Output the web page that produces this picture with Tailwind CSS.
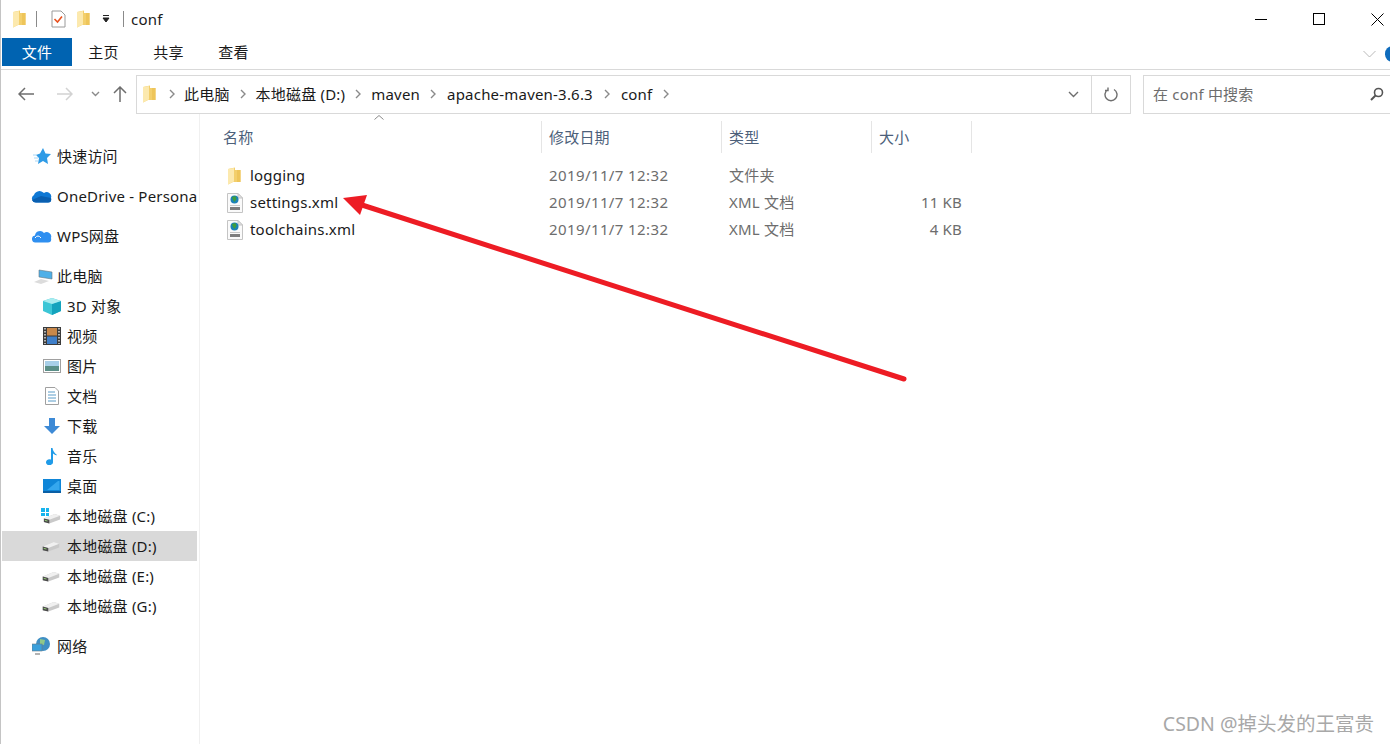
<!DOCTYPE html>
<html lang="zh-CN">
<head>
  <meta charset="UTF-8" />
  <title>conf</title>
  <script src="https://cdn.jsdelivr.net/npm/@tailwindcss/browser@4"></script>
</head>
<body class="overflow-hidden bg-white">
  <!-- shared icons -->
  <svg class="hidden">
    <symbol id="folder" viewBox="0 0 14 18">
      <path d="M1 2 L8 0.500 V3 H13.500 V15 H6 L1 17.500 Z" fill="#f3cf6c"/>
      <path d="M1 2 L7 1 V14.500 L1 17.500 Z" fill="#fce9ae"/>
      <path d="M10 3 H13.500 V15 H10 Z" fill="#eec55a"/>
    </symbol>
    <symbol id="xmlfile" viewBox="0 0 18 20">
      <path d="M1.500 0.500 H12 L16.500 5 V19.500 H1.500 Z" fill="#fafafa" stroke="#c4c4c4"/>
      <path d="M12 0.500 V5 H16.500 Z" fill="#e4e4e4" stroke="#c4c4c4"/>
      <circle cx="8.500" cy="6.500" r="4" fill="#1b82b8"/>
      <path d="M6 4 L9.500 3 L10.500 6 L8.500 9 L7 7 Z" fill="#3f9e3a"/>
      <rect x="4" y="12" width="10" height="1" fill="#c8c8c8"/>
      <rect x="4" y="14" width="10" height="3" fill="#7d7d7d"/>
    </symbol>
    <symbol id="disk" viewBox="0 0 20 12">
      <path d="M1 6 L13 1 L19 3 V7 L7 11.500 L1 10 Z" fill="#c9c9c9"/>
      <path d="M1 6 L13 1 L19 3 L7 7.500 Z" fill="#f0f0f0"/>
      <path d="M1 6 L7 7.500 V11.500 L1 10 Z" fill="#4a4a4a"/>
      <path d="M2 8 L5 8.800" stroke="#9ad67a"/>
    </symbol>
    <symbol id="chev" viewBox="0 0 8 10">
      <path d="M2 1 L6 5 L2 9" fill="none" stroke="#8a8a8a" stroke-width="1.400"/>
    </symbol>
  </svg>

  <div class="relative h-[744px] w-[1390px] overflow-hidden border-l border-l-[#c4c4c4] text-[15px] tracking-[0.2px] text-[#1a1a1a]" style="font-family:'Noto Sans','Noto Sans CJK SC',sans-serif">
    <div class="absolute left-[-1px] top-0 h-[250px] w-px bg-black"></div>

    <!-- title bar -->
    <div class="flex h-[38px] items-center pl-[11px]">
      <svg class="h-[18px] w-[14px]"><use href="#folder"/></svg>
      <div class="ml-[10px] h-[16px] w-px bg-[#8a8a8a]"></div>
      <svg class="ml-[14px] h-[18px] w-[15px]" viewBox="0 0 15 18">
        <path d="M1 1 H10 L14 5 V17 H1 Z" fill="#fff" stroke="#9a9a9a"/>
        <path d="M3.500 9 L6.500 12 L11 6.500" fill="none" stroke="#e8511f" stroke-width="1.600"/>
      </svg>
      <svg class="ml-[10px] h-[18px] w-[14px]"><use href="#folder"/></svg>
      <svg class="ml-[12px] h-[10px] w-[8px]" viewBox="0 0 8 10"><path d="M1 1.500 H7 M1 4 H7 L4 8 Z" stroke="#222" fill="#222"/></svg>
      <div class="ml-[13px] h-[16px] w-px bg-[#8a8a8a]"></div>
      <span class="ml-[7px]">conf</span>
      <div class="ml-auto flex items-center">
        <div class="h-px w-[12px] bg-black"></div>
        <div class="ml-[46px] h-[12px] w-[12px] border border-black"></div>
        <svg class="ml-[46px] mr-[6px] h-[13px] w-[13px]" viewBox="0 0 13 13"><path d="M0.500 0.500 L12.500 12.500 M12.500 0.500 L0.500 12.500" stroke="#000"/></svg>
      </div>
    </div>

    <!-- ribbon tabs -->
    <div class="flex h-[32px] items-start border-b border-[#d9d9d9] pl-px">
      <div class="flex h-[28px] w-[70px] items-center justify-center bg-[#0063b1] text-white">文件</div>
      <div class="ml-[-1px] flex h-[29px] w-[65px] items-center justify-center">主页</div>
      <div class="flex h-[29px] w-[65px] items-center justify-center">共享</div>
      <div class="flex h-[29px] w-[65px] items-center justify-center">查看</div>
      <div class="ml-auto flex items-center pt-[8px]">
        <svg class="h-[8px] w-[13px]" viewBox="0 0 13 8"><path d="M0.500 1 L6.500 7 L12.500 1" fill="none" stroke="#b9b9b9"/></svg>
        <div class="ml-[9px] mr-[-10px] h-[16px] w-[15px] rounded-full bg-[#0f6cbd]"></div>
      </div>
    </div>

    <!-- address row -->
    <div class="flex h-[44px] items-center pl-[17px] pt-[4px]">
      <svg class="h-[14px] w-[16px] shrink-0" viewBox="0 0 16 14"><path d="M7 1 L1 7 L7 13 M1 7 H16" fill="none" stroke="#6e6e6e" stroke-width="1.500"/></svg>
      <svg class="ml-[23px] h-[14px] w-[16px] shrink-0" viewBox="0 0 16 14"><path d="M9 1 L15 7 L9 13 M0 7 H15" fill="none" stroke="#d2d2d2" stroke-width="1.500"/></svg>
      <svg class="ml-[18px] h-[6px] w-[9px] shrink-0" viewBox="0 0 9 6"><path d="M1 1 L4.500 4.500 L8 1" fill="none" stroke="#8a8a8a" stroke-width="1.400"/></svg>
      <svg class="ml-[13px] h-[16px] w-[14px] shrink-0" viewBox="0 0 14 16"><path d="M1 7 L7 1 L13 7 M7 1 V16" fill="none" stroke="#6e6e6e" stroke-width="1.500"/></svg>
      <div class="ml-[9px] flex h-[39px] w-[995px] shrink-0 items-center border border-[#d9d9d9] pl-[5px]">
        <svg class="h-[18px] w-[14px]"><use href="#folder"/></svg>
        <svg class="ml-[12px] h-[10px] w-[8px]"><use href="#chev"/></svg>
        <span class="ml-[8px]">此电脑</span>
        <svg class="ml-[9px] h-[10px] w-[8px]"><use href="#chev"/></svg>
        <span class="ml-[9px]">本地磁盘 (D:)</span>
        <svg class="ml-[9px] h-[10px] w-[8px]"><use href="#chev"/></svg>
        <span class="ml-[9px]">maven</span>
        <svg class="ml-[9px] h-[10px] w-[8px]"><use href="#chev"/></svg>
        <span class="ml-[10px]">apache-maven-3.6.3</span>
        <svg class="ml-[10px] h-[10px] w-[8px]"><use href="#chev"/></svg>
        <span class="ml-[10px]">conf</span>
        <svg class="ml-[10px] h-[10px] w-[8px]"><use href="#chev"/></svg>
        <svg class="ml-auto mr-[12px] h-[7px] w-[11px]" viewBox="0 0 11 7"><path d="M1 1 L5.500 5.500 L10 1" fill="none" stroke="#6e6e6e" stroke-width="1.400"/></svg>
        <div class="flex h-full w-[39px] items-center justify-center border-l border-[#d9d9d9]">
          <svg class="h-[15px] w-[14px]" viewBox="0 0 14 15"><path d="M4 2.500 A6 6 0 1 0 10 2.500 M4 0.500 V3.500 H1" fill="none" stroke="#6e6e6e" stroke-width="1.400"/></svg>
        </div>
      </div>
      <div class="ml-[12px] flex h-[39px] w-[260px] shrink-0 items-center border border-[#d9d9d9] pl-[9px] text-[#6d6d6d]">
        <span>在 conf 中搜索</span>
        <svg class="ml-auto mr-[18px] h-[14px] w-[14px]" viewBox="0 0 14 14"><circle cx="8.500" cy="5.500" r="4" fill="none" stroke="#555" stroke-width="1.600"/><path d="M5.500 8.500 L1 13" stroke="#555" stroke-width="2"/></svg>
      </div>
    </div>

    <!-- main -->
    <div class="flex h-[630px]">
      <!-- nav pane -->
      <nav class="w-[199px] shrink-0 border-r border-[#f0f0f0] pt-[27px]">
        <div class="flex h-[30px] items-center pl-[32px]">
          <svg class="h-[16px] w-[18px]" viewBox="0 0 18 16"><path d="M10 0 L12.500 5.500 L18 6 L14 10 L15 16 L10 13 L5 16 L6 10 L3 7 L7 5.500 Z" fill="#2e9be6"/><path d="M0 7 H4 M1 10 H5 M2 13 H5" stroke="#a9d6f5"/></svg>
          <span class="ml-[6px]">快速访问</span>
        </div>
        <div class="mt-[10px] flex h-[30px] items-center pl-[30px]">
          <svg class="h-[13px] w-[21px]" viewBox="0 0 21 13"><path d="M5 12.500 A4 4 0 0 1 3 5 A6 6 0 0 1 13 3 A4.500 4.500 0 0 1 20 8 Q21 12.500 17 12.500 Z" fill="#0f78d4"/><path d="M1 10 L10 6 L20 8 Q21 12.500 17 12.500 H5 Q2 12.500 1 10 Z" fill="#0a5fb0"/></svg>
          <span class="ml-[5px] whitespace-nowrap">OneDrive - Persona</span>
        </div>
        <div class="mt-[10px] flex h-[30px] items-center pl-[31px]">
          <svg class="h-[13px] w-[20px]" viewBox="0 0 20 13"><path d="M4 12.500 A3.500 3.500 0 0 1 3 5.500 A5 5 0 0 1 12 3 A4.500 4.500 0 0 1 19 8 Q20 12.500 16 12.500 Z" fill="#2f8ff0"/><path d="M3 8 Q6 4 9 8" fill="none" stroke="#fff"/></svg>
          <span class="ml-[5px]">WPS网盘</span>
        </div>
        <div class="mt-[10px] flex h-[30px] items-center pl-[32px]">
          <svg class="h-[15px] w-[20px]" viewBox="0 0 20 15"><path d="M6 1 L19 3 V10 L6 8 Z" fill="#4fb0e8" stroke="#66777f" stroke-width="0.600"/><path d="M1 13 L8 10 L16 12 L8 15 Z" fill="#dcdcdc"/></svg>
          <span class="ml-[4px]">此电脑</span>
        </div>
        <div class="flex h-[30px] items-center pl-[42px]">
          <svg class="h-[17px] w-[18px]" viewBox="0 0 18 17"><path d="M9 0 L18 3 V13 L9 17 L0 13 V3 Z" fill="#3cc6d6"/><path d="M9 6 L18 3 V13 L9 17 Z" fill="#14a3bd"/><path d="M0 3 L9 0 L18 3 L9 6 Z" fill="#a8ecef"/></svg>
          <span class="ml-[6px]">3D 对象</span>
        </div>
        <div class="flex h-[30px] items-center pl-[42px]">
          <svg class="h-[18px] w-[18px]" viewBox="0 0 18 18"><rect width="18" height="18" fill="#3b3b3b"/><rect x="4" y="1" width="10" height="7.500" fill="#c9884a"/><rect x="4" y="9.500" width="10" height="7.500" fill="#3f7fc9"/><path d="M2 1 V17 M16 1 V17" stroke="#ddd" stroke-dasharray="1.500 1.500" stroke-width="1.500"/></svg>
          <span class="ml-[6px]">视频</span>
        </div>
        <div class="flex h-[30px] items-center pl-[42px]">
          <svg class="h-[14px] w-[18px]" viewBox="0 0 18 14"><rect x="0.500" y="0.500" width="17" height="13" fill="#fff" stroke="#a0a0a0"/><rect x="2" y="2" width="14" height="5" fill="#a8cfe8"/><rect x="2" y="7" width="14" height="5" fill="#5b8f88"/></svg>
          <span class="ml-[6px]">图片</span>
        </div>
        <div class="flex h-[30px] items-center pl-[44px]">
          <svg class="h-[18px] w-[14px]" viewBox="0 0 14 18"><path d="M0.500 0.500 H10 L13.500 4 V17.500 H0.500 Z" fill="#fff" stroke="#a0a0a0"/><path d="M3 5 H10 M3 8 H11 M3 11 H11 M3 14 H11" stroke="#5a9cc8"/></svg>
          <span class="ml-[8px]">文档</span>
        </div>
        <div class="flex h-[30px] items-center pl-[43px]">
          <svg class="h-[16px] w-[16px]" viewBox="0 0 16 16"><path d="M5 0 H11 V8 H16 L8 16 L0 8 H5 Z" fill="#3d8ad6"/></svg>
          <span class="ml-[7px]">下载</span>
        </div>
        <div class="flex h-[30px] items-center pl-[45px]">
          <svg class="h-[17px] w-[12px]" viewBox="0 0 12 17"><path d="M5 0 H6.500 Q7 4 11 7 Q10 8 7 5.500 V14 A3.500 3 0 1 1 5 11.500 Z" fill="#1f9be8"/></svg>
          <span class="ml-[9px]">音乐</span>
        </div>
        <div class="flex h-[30px] items-center pl-[42px]">
          <svg class="h-[14px] w-[18px]" viewBox="0 0 18 14"><rect width="18" height="13" fill="#0f86d8"/><path d="M4 11 L15 2 H16.500 V11 Z" fill="#35a7ee"/><rect y="12" width="18" height="2" fill="#0a5fa5"/></svg>
          <span class="ml-[6px]">桌面</span>
        </div>
        <div class="flex h-[30px] items-center pl-[40px]">
          <div class="relative h-[16px] w-[20px]">
            <svg class="absolute bottom-0 right-0 h-[11px] w-[18px]"><use href="#disk"/></svg>
            <div class="absolute left-0 top-0 grid h-[8px] w-[8px] grid-cols-2 gap-px"><i class="bg-[#18b4ee]"></i><i class="bg-[#18b4ee]"></i><i class="bg-[#18b4ee]"></i><i class="bg-[#18b4ee]"></i></div>
          </div>
          <span class="ml-[6px]">本地磁盘 (C:)</span>
        </div>
        <div class="ml-px mr-[2px] flex h-[30px] items-center bg-[#d9d9d9] pl-[39px]">
          <svg class="h-[11px] w-[20px]"><use href="#disk"/></svg>
          <span class="ml-[6px]">本地磁盘 (D:)</span>
        </div>
        <div class="flex h-[30px] items-center pl-[40px]">
          <svg class="h-[11px] w-[20px]"><use href="#disk"/></svg>
          <span class="ml-[6px]">本地磁盘 (E:)</span>
        </div>
        <div class="flex h-[30px] items-center pl-[40px]">
          <svg class="h-[11px] w-[20px]"><use href="#disk"/></svg>
          <span class="ml-[6px]">本地磁盘 (G:)</span>
        </div>
        <div class="mt-[10px] flex h-[30px] items-center pl-[31px]">
          <svg class="h-[18px] w-[19px]" viewBox="0 0 19 18"><circle cx="11" cy="7" r="7" fill="#3f8fc4"/><path d="M8 2 L13 3 L12 8 L8 7 Z" fill="#8fc88a"/><rect x="0" y="7" width="10" height="7" fill="#3aa0dc" stroke="#6a7a84" stroke-width="0.600"/><path d="M3 17 H8" stroke="#9a9a9a" stroke-width="1.500"/></svg>
          <span class="ml-[6px]">网络</span>
        </div>
      </nav>

      <!-- file list -->
      <section class="pl-[2px]">
        <div class="relative flex h-[39px] pt-[7px] text-[#4c607a]">
          <svg class="absolute left-[172px] top-[1px] h-[5px] w-[10px]" viewBox="0 0 10 5"><path d="M0.500 4.500 L5 0.500 L9.500 4.500" fill="none" stroke="#8a8a8a"/></svg>
          <div class="flex h-[32px] w-[340px] items-center border-r border-[#e5e5e5] pl-[21px]">名称</div>
          <div class="flex h-[32px] w-[180px] items-center border-r border-[#e5e5e5] pl-[7px]">修改日期</div>
          <div class="flex h-[32px] w-[150px] items-center border-r border-[#e5e5e5] pl-[7px]">类型</div>
          <div class="flex h-[32px] w-[100px] items-center border-r border-[#e5e5e5] pl-[7px]">大小</div>
        </div>
        <div class="mt-[9px] flex h-[27px] items-center">
          <div class="flex w-[340px] items-center pl-[25px]"><svg class="h-[18px] w-[14px]"><use href="#folder"/></svg><span class="ml-[9px]">logging</span></div>
          <div class="w-[180px] pl-[7px] tracking-[0.4px] text-[#6d6d6d]">2019/11/7 12:32</div>
          <div class="w-[150px] pl-[7px] text-[#6d6d6d]">文件夹</div>
          <div class="w-[100px] pr-[10px] text-right text-[#6d6d6d]"></div>
        </div>
        <div class="flex h-[27px] items-center">
          <div class="flex w-[340px] items-center pl-[24px]"><svg class="h-[20px] w-[18px]"><use href="#xmlfile"/></svg><span class="ml-[6px]">settings.xml</span></div>
          <div class="w-[180px] pl-[7px] tracking-[0.4px] text-[#6d6d6d]">2019/11/7 12:32</div>
          <div class="w-[150px] pl-[7px] text-[#6d6d6d]">XML 文档</div>
          <div class="w-[100px] pr-[10px] text-right text-[#6d6d6d]">11 KB</div>
        </div>
        <div class="flex h-[27px] items-center">
          <div class="flex w-[340px] items-center pl-[24px]"><svg class="h-[20px] w-[18px]"><use href="#xmlfile"/></svg><span class="ml-[6px]">toolchains.xml</span></div>
          <div class="w-[180px] pl-[7px] tracking-[0.4px] text-[#6d6d6d]">2019/11/7 12:32</div>
          <div class="w-[150px] pl-[7px] text-[#6d6d6d]">XML 文档</div>
          <div class="w-[100px] pr-[10px] text-right text-[#6d6d6d]">4 KB</div>
        </div>
      </section>
    </div>

    <!-- annotation arrow drawn over the window -->
    <svg class="absolute left-[-1px] top-0 h-[744px] w-[1390px]" viewBox="0 0 1390 744">
      <path d="M904 379 L362 205" stroke="#ed1c24" stroke-width="5" stroke-linecap="round" fill="none"/>
      <path d="M343 198 L367 195 L360 215 Z" fill="#ed1c24"/>
    </svg>

    <!-- watermark -->
    <div class="absolute bottom-[7px] right-[16px] text-[19.500px] leading-[26px] tracking-normal text-[#a8a8a8]">CSDN @掉头发的王富贵</div>
  </div>
</body>
</html>
